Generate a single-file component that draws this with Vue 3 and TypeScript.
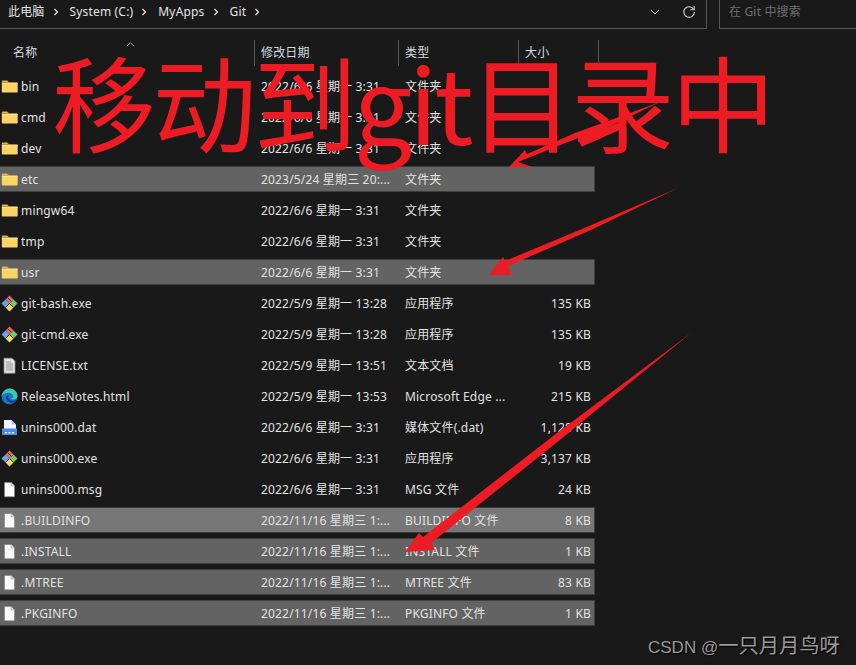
<script setup lang="ts">
type Icon = "folder" | "git" | "text" | "edge" | "media" | "file"
type Tone = "" | "selected" | "hover"

interface FileRow {
  name: string
  date: string
  type: string
  size?: string
  icon: Icon
  tone?: Tone
}

const crumbs = ["此电脑", "System (C:)", "MyApps", "Git"]

const columns = [
  { label: "名称", cls: "col-name" },
  { label: "修改日期", cls: "col-date" },
  { label: "类型", cls: "col-type" },
  { label: "大小", cls: "col-size" },
]

const files: FileRow[] = [
  { name: "bin", date: "2022/6/6 星期一 3:31", type: "文件夹", icon: "folder" },
  { name: "cmd", date: "2022/6/6 星期一 3:31", type: "文件夹", icon: "folder" },
  { name: "dev", date: "2022/6/6 星期一 3:31", type: "文件夹", icon: "folder" },
  { name: "etc", date: "2023/5/24 星期三 20:...", type: "文件夹", icon: "folder", tone: "selected" },
  { name: "mingw64", date: "2022/6/6 星期一 3:31", type: "文件夹", icon: "folder" },
  { name: "tmp", date: "2022/6/6 星期一 3:31", type: "文件夹", icon: "folder" },
  { name: "usr", date: "2022/6/6 星期一 3:31", type: "文件夹", icon: "folder", tone: "selected" },
  { name: "git-bash.exe", date: "2022/5/9 星期一 13:28", type: "应用程序", size: "135 KB", icon: "git" },
  { name: "git-cmd.exe", date: "2022/5/9 星期一 13:28", type: "应用程序", size: "135 KB", icon: "git" },
  { name: "LICENSE.txt", date: "2022/5/9 星期一 13:51", type: "文本文档", size: "19 KB", icon: "text" },
  { name: "ReleaseNotes.html", date: "2022/5/9 星期一 13:53", type: "Microsoft Edge ...", size: "215 KB", icon: "edge" },
  { name: "unins000.dat", date: "2022/6/6 星期一 3:31", type: "媒体文件(.dat)", size: "1,128 KB", icon: "media" },
  { name: "unins000.exe", date: "2022/6/6 星期一 3:31", type: "应用程序", size: "3,137 KB", icon: "git" },
  { name: "unins000.msg", date: "2022/6/6 星期一 3:31", type: "MSG 文件", size: "24 KB", icon: "file" },
  { name: ".BUILDINFO", date: "2022/11/16 星期三 1:...", type: "BUILDINFO 文件", size: "8 KB", icon: "file", tone: "hover" },
  { name: ".INSTALL", date: "2022/11/16 星期三 1:...", type: "INSTALL 文件", size: "1 KB", icon: "file", tone: "selected" },
  { name: ".MTREE", date: "2022/11/16 星期三 1:...", type: "MTREE 文件", size: "83 KB", icon: "file", tone: "selected" },
  { name: ".PKGINFO", date: "2022/11/16 星期三 1:...", type: "PKGINFO 文件", size: "1 KB", icon: "file", tone: "selected" },
]
</script>

<template>
  <div class="explorer">
    <div class="toolbar">
      <div class="address">
        <template v-for="crumb in crumbs" :key="crumb">
          <span class="crumb">{{ crumb }}</span>
          <svg class="chevron" width="6" height="8" viewBox="0 0 6 8">
            <path d="M1.5 1l3 3-3 3" fill="none" stroke="#e0e0e0" stroke-width="1.3" />
          </svg>
        </template>
        <svg class="drop" width="10" height="6" viewBox="0 0 10 6">
          <path d="M1 1l4 4 4-4" fill="none" stroke="#d0d0d0" stroke-width="1" />
        </svg>
        <svg class="refresh" width="14" height="14" viewBox="0 0 14 14">
          <path d="M11.6 4.200A5.300 5.300 0 1 0 12.400 7" fill="none" stroke="#d0d0d0" stroke-width="1.100" />
          <path d="M12.200 1v3.800H8.400" fill="none" stroke="#d0d0d0" stroke-width="1.100" />
        </svg>
      </div>
      <div class="search">在 Git 中搜索</div>
    </div>

    <div class="columns">
      <div v-for="col in columns" :key="col.label" class="column" :class="col.cls">{{ col.label }}</div>
      <svg class="sort" width="9" height="5" viewBox="0 0 9 5">
        <path d="M.8 4.200L4.500.8l3.700 3.400" fill="none" stroke="#b0b0b0" stroke-width="1" />
      </svg>
    </div>

    <div class="rows">
      <div v-for="file in files" :key="file.name" class="row" :class="file.tone">
        <div class="name">
          <svg class="icon" width="17" height="17" viewBox="0 0 17 17">
            <template v-if="file.icon === 'folder'">
              <path d="M.8 3.800C.8 3.100 1.300 2.600 2 2.600h4.200l1.600 1.700h-7z" fill="#e6b045" />
              <path d="M.8 4.600h15c.5 0 .9.4.9.9v8c0 .6-.5 1.100-1.100 1.100H1.900C1.300 14.600.8 14.100.8 13.500z" fill="#fbd466" />
              <path d="M.8 5.300h15.900" stroke="#ffe79c" stroke-width=".8" />
            </template>
            <template v-else-if="file.icon === 'git'">
              <path d="M8.500.5l4 4-4 4-4-4z" fill="#e8656e" />
              <path d="M8.500 8.500l4-4 4 4-4 4z" fill="#7bc75f" />
              <path d="M8.500 8.500l4 4-4 4-4-4z" fill="#f4d76e" />
              <path d="M.5 8.500l4-4 4 4-4 4z" fill="#6aa2ea" />
              <path d="M6.500 2.500l4 4M4.500 12.500l4-4 4 4" stroke="#333" stroke-width="1" fill="none" />
            </template>
            <template v-else-if="file.icon === 'text'">
              <path d="M3 1.200h8l3 3v12H3z" fill="#e4e4e4" stroke="#8b8b8b" stroke-width=".8" />
              <path d="M5 5h5M5 7h7M5 9h7M5 11h7M5 13h7" stroke="#8a8a8a" stroke-width=".9" />
            </template>
            <template v-else-if="file.icon === 'edge'">
              <circle cx="8.500" cy="8.500" r="7.900" fill="#1577c9" />
              <path d="M.7 8C1.500 3.500 5 .6 8.500.6c4.500 0 7.900 3.400 7.900 7.200 0 2.500-2 3.600-3.800 3.600-1.300 0-2.300-.5-2.600-1 1.500-.2 2.400-1.300 2.200-2.500C11.700 6 10 4.700 7.500 4.700 4.500 4.700 2 6 .7 8z" fill="#3ec9a6" />
              <path d="M5 9c0 3.500 3 6 6.500 5.800 1.800-.4 3-1.500 3.800-3-1.300 1-3.500 1.200-5 .7C7.500 11.700 6.500 10 7.500 7.500 6 7.500 5 8 5 9z" fill="#0c3f86" />
            </template>
            <template v-else-if="file.icon === 'media'">
              <path d="M3 1h7.500L15 5.500V10H3z" fill="#f2f6fd" />
              <path d="M10.500 1L15 5.500h-4.500z" fill="#9fc0f3" />
              <path d="M1 9.500h15v6.500H1z" fill="#4d8af0" />
              <path d="M4 13h2v1.500H4zM7.500 13h2v1.500h-2zM11 13h2v1.500h-2z" fill="#f2f6fd" />
            </template>
            <template v-else>
              <path d="M3.500 1.500h6.800l3.200 3.200v11.100h-10z" fill="#fbfbfb" stroke="#7e7e7e" stroke-width=".6" />
              <path d="M10 1.500v3.500h3.500" fill="#d8d8d8" stroke="#9a9a9a" stroke-width=".5" />
            </template>
          </svg>
          <span>{{ file.name }}</span>
        </div>
        <div class="date">{{ file.date }}</div>
        <div class="type">{{ file.type }}</div>
        <div class="size">{{ file.size }}</div>
      </div>
    </div>

    <!-- 标注：红色大字和箭头 -->
    <div class="headline">移动到git目录中</div>
    <svg class="arrows" width="856" height="665" viewBox="0 0 856 665">
      <polygon fill="#ed1c24" points="660,102 578,142 578,138 518,162 532,167 509,167 525,150 527,154 575,133" />
      <polygon fill="#ed1c24" points="678,188 591,230 508,266 512,275 489,275 503,257 505,261 589,226" />
      <polygon fill="#ed1c24" points="691,333 561,439 431,543 435,550 405,552 419,533 423,537 557,433" />
    </svg>
    <div class="watermark">CSDN @<span>一只月月鸟呀</span></div>
  </div>
</template>

<style scoped>
.explorer {
  position: relative;
  width: 856px;
  height: 665px;
  overflow: hidden;
  background: #191919;
  color: #e2e2e2;
  font-family: "Noto Sans", "Noto Sans CJK SC", sans-serif;
  font-size: 12px;
  letter-spacing: 0.17px;
}

.toolbar {
  display: flex;
  height: 29px;
}

.address {
  display: flex;
  align-items: center;
  width: 707px;
  padding: 0 10px 5px 8px;
  box-sizing: border-box;
  border-right: 1px solid #555;
  border-bottom: 1px solid #555;
}

.crumb {
  color: #e4e4e4;
  line-height: 22px;
}

.chevron {
  margin: 0 11px 0 8px;
}

.drop {
  margin-left: auto;
}

.refresh {
  margin-left: 22px;
}

.search {
  margin-left: 12px;
  flex: 1;
  padding-left: 9px;
  line-height: 24px;
  color: #6f6f6f;
  border-left: 1px solid #555;
  border-bottom: 1px solid #555;
}

.columns {
  position: relative;
  display: flex;
  height: 26px;
  margin-top: 11px;
  margin-bottom: 7px;
}

.column {
  box-sizing: border-box;
  line-height: 26px;
  color: #d4dbe2;
  padding-left: 6px;
  border-left: 1px solid #555;
}

.col-name {
  width: 254px;
  padding-left: 13px;
  border-left: none;
}

.col-date {
  width: 144px;
}

.col-type {
  width: 120px;
}

.col-size {
  width: 81px;
  border-right: 1px solid #555;
}

.sort {
  position: absolute;
  left: 126px;
  top: 2px;
}

.rows {
  display: flex;
  flex-direction: column;
  gap: 5px;
  width: 595px;
}

.row {
  display: flex;
  align-items: center;
  height: 26px;
  box-sizing: border-box;
  padding-right: 3px;
  border: 1px solid transparent;
  border-left: none;
  border-radius: 0 1px 1px 0;
}

.row.selected {
  background: #636363;
  border-color: #3e3e3e;
}

.row.hover {
  background: #777;
  border-color: #3e3e3e;
}

.name {
  display: flex;
  align-items: center;
  gap: 3px;
  width: 261px;
}

.icon {
  flex: none;
  margin-left: 1px;
}

.date {
  width: 144px;
}

.type {
  width: 110px;
  white-space: nowrap;
}

.size {
  flex: 1;
  text-align: right;
  white-space: nowrap;
}

.headline {
  position: absolute;
  left: 52px;
  top: 30px;
  font-family: "Noto Sans CJK SC", sans-serif;
  font-size: 104px;
  line-height: 140px;
  letter-spacing: -3.400px;
  color: #ed1c24;
  white-space: nowrap;
}

.arrows {
  position: absolute;
  left: 0;
  top: 0;
}

.watermark {
  position: absolute;
  left: 648px;
  top: 632px;
  font-family: "Liberation Sans", "Noto Sans CJK SC", sans-serif;
  font-size: 17px;
  line-height: 28px;
  letter-spacing: 0;
  color: #9a9a9a;
  text-shadow: 1px 1px 1px #000;
  white-space: nowrap;
}

.watermark span {
  font-size: 20.300px;
}
</style>
